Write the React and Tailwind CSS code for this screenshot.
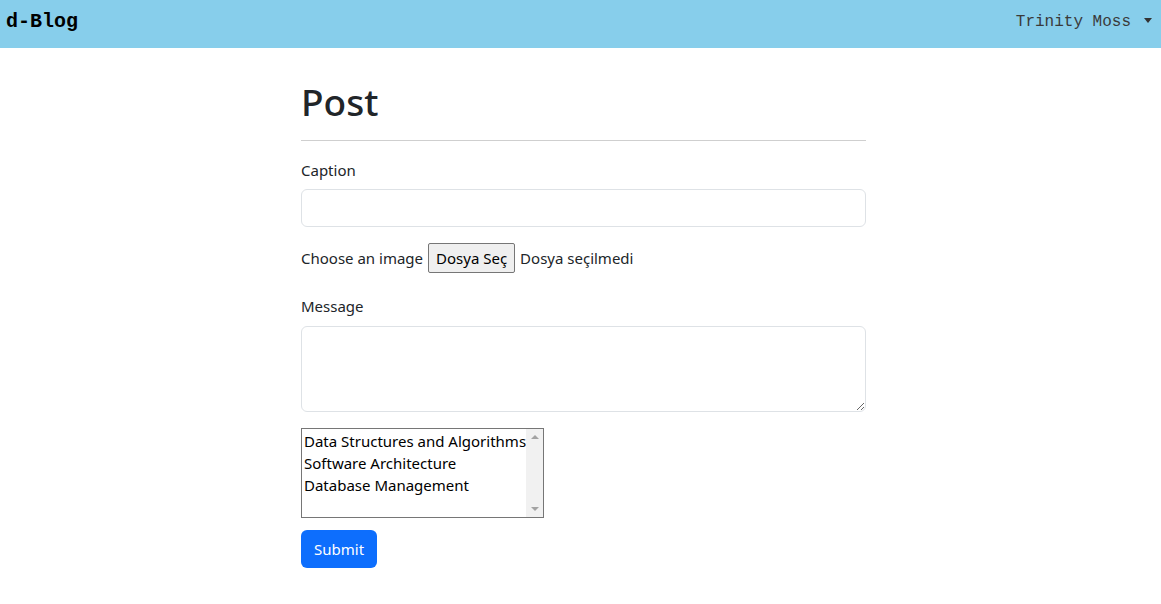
import React, { useState } from 'react';

const body = { fontFamily: '"Segoe UI", "Noto Sans", "Open Sans", sans-serif' };
const mono = { fontFamily: '"Courier New", "Liberation Mono", monospace' };

const topics = ['Data Structures and Algorithms', 'Software Architecture', 'Database Management'];

const App = () => {
  const [caption, setCaption] = useState('');
  const [message, setMessage] = useState('');

  return (
    <div className="min-h-[604px] bg-white text-[#212529]" style={body}>
      {/* Navbar */}
      <nav className="h-12 bg-[#87ceeb] flex items-center justify-between pl-[6px] pr-[9px] pb-[4px]">
        <span className="text-[20px] font-bold text-black leading-none" style={mono}>
          d-Blog
        </span>
        <div className="flex items-center gap-[13px] text-[16px] text-[#3a3a3a]" style={mono}>
          <span>Trinity Moss</span>
          <span className="w-0 h-0 border-l-[4px] border-r-[4px] border-t-[5px] border-l-transparent border-r-transparent border-t-[#333] mb-[3px]" />
        </div>
      </nav>

      {/* Form */}
      <form className="ml-[301px] w-[565px] pt-[30px]" onSubmit={(e) => e.preventDefault()}>
        <h1 className="text-[37px] font-medium leading-[1.3] mb-[14px]">Post</h1>
        <hr className="border-0 border-t border-[#cfcfcf] mb-[17px]" />

        <label className="block text-[15px] leading-[24px] mb-[7px]">Caption</label>
        <input
          value={caption}
          onChange={(e) => setCaption(e.target.value)}
          className="block w-full h-[38px] border border-[#dee2e6] rounded-[6px] px-3 outline-none"
        />

        <div className="flex items-center mt-[16px] text-[15px] h-[30px]">
          <span className="mr-[5px]">Choose an image</span>
          <span className="h-[30px] px-[7px] flex items-center border border-[#767676] rounded-[2px] bg-[#efefef] text-black">
            Dosya Seç
          </span>
          <span className="ml-[5px]">Dosya seçilmedi</span>
        </div>

        <label className="block text-[15px] leading-[24px] mt-[21px] mb-[8px]">Message</label>
        <textarea
          value={message}
          onChange={(e) => setMessage(e.target.value)}
          className="block w-full h-[86px] border border-[#dee2e6] rounded-[6px] px-3 py-2 outline-none"
        />

        <div className="mt-[16px] w-[243px] h-[90px] border border-[#767676] flex">
          <ul className="flex-1 pl-[2px] pt-[1px] text-[15px] leading-[22px] text-black whitespace-nowrap overflow-hidden">
            {topics.map((t) => (
              <li key={t}>{t}</li>
            ))}
          </ul>
          <div className="w-[17px] bg-[#f1f1f1] flex flex-col items-center justify-between py-[6px]">
            <span className="w-0 h-0 border-l-[4px] border-r-[4px] border-b-[4px] border-l-transparent border-r-transparent border-b-[#a3a3a3]" />
            <span className="w-0 h-0 border-l-[4px] border-r-[4px] border-t-[4px] border-l-transparent border-r-transparent border-t-[#a3a3a3]" />
          </div>
        </div>

        <button
          type="submit"
          className="mt-[12px] h-[38px] px-[13px] bg-[#0d6efd] text-white text-[15px] rounded-[6px]"
        >
          Submit
        </button>
      </form>
    </div>
  );
};

export default App;
